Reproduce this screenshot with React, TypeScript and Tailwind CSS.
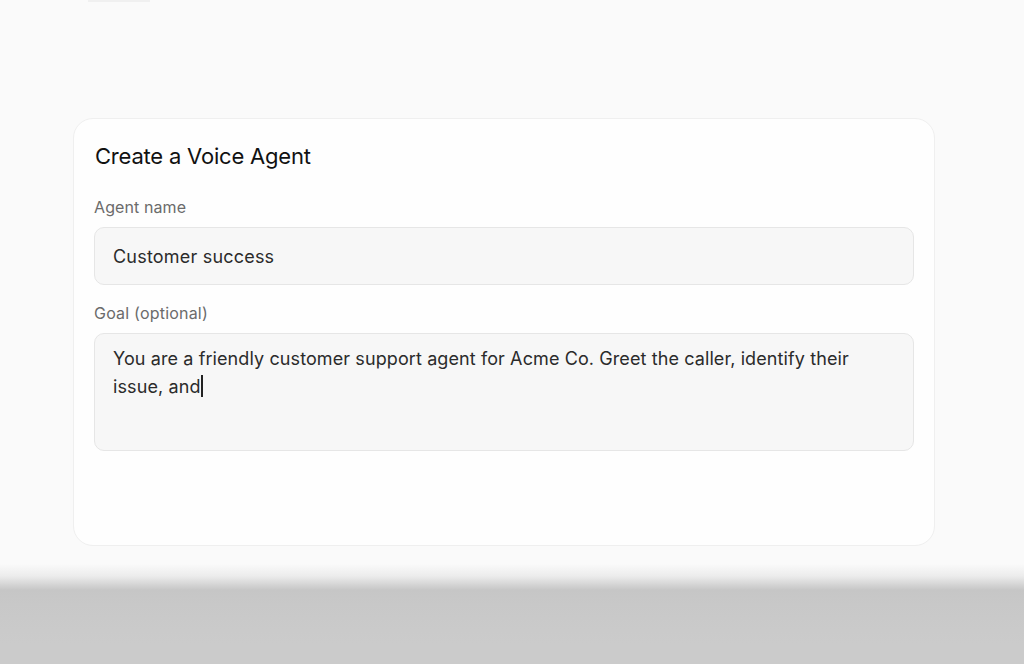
export default function App() {
  return (
    <div className="h-[664px] w-full overflow-hidden bg-[#fafafa] flex flex-col font-['Inter',sans-serif]">
      <div className="h-[118px] shrink-0 px-[88px]">
        <div className="h-[2px] w-[62px] bg-[#f0f0f0]" />
      </div>
      <div className="pl-[73px] pr-[89px] shrink-0">
        <div className="h-[428px] rounded-[20px] border border-[#efefef] bg-[#fefefe] px-[20px] pt-[23px]">
          <h1 className="pl-px text-[22px] leading-[28px] text-[#111] tracking-[-0.2px]">Create a Voice Agent</h1>
          <label className="mt-[27px] block text-[16px] leading-[20px] text-[#6b6b6b] tracking-[0.1px]">Agent name</label>
          <div className="mt-[10px] h-[58px] rounded-[10px] border border-[#e6e6e6] bg-[#f7f7f7] px-[18px] flex items-center text-[18px] tracking-[0.2px] text-[#2b2b2b]">
            Customer success
          </div>
          <label className="mt-[18px] block text-[16px] leading-[20px] text-[#6b6b6b] tracking-[0.2px]">Goal (optional)</label>
          <div className="mt-[10px] h-[118px] rounded-[10px] border border-[#e6e6e6] bg-[#f7f7f7] px-[18px] pt-[11px] text-[18px] leading-[28px] tracking-[0.1px] text-[#2b2b2b]">
            You are a friendly customer support agent for Acme Co. Greet the caller, identify their
            <br />
            issue, and<span className="inline-block h-[22px] w-[2px] bg-[#222] align-[-4px]" />
          </div>
        </div>
      </div>
      <div className="h-[18px] shrink-0" />
      <div className="flex-1 bg-[linear-gradient(to_bottom,#fafafa_0px,#ececec_12px,#c6c6c6_26px,#c8c8c8_40px,#cbcbcb_80px)]" />
    </div>
  )
}
